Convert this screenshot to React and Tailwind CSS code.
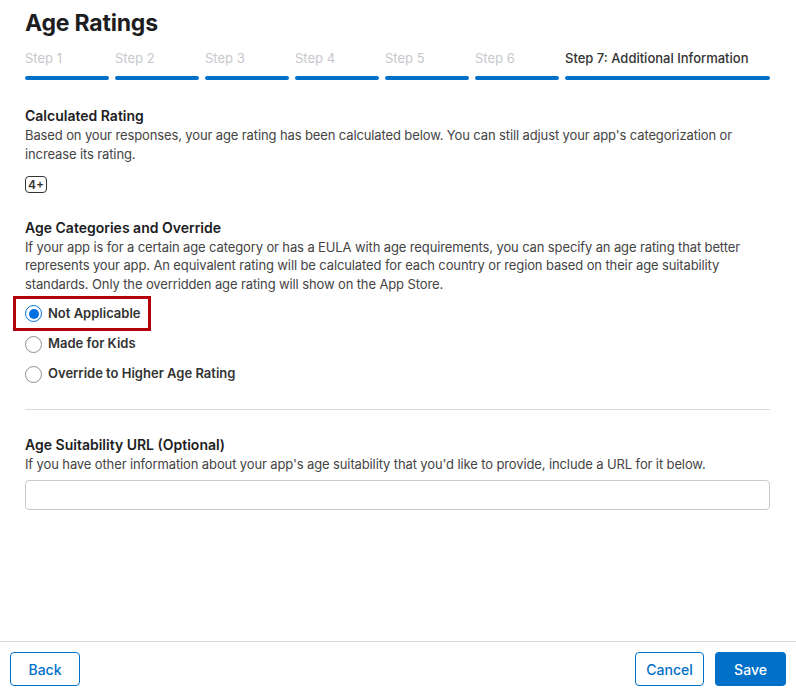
import React from "react";

const steps = ["Step 1", "Step 2", "Step 3", "Step 4", "Step 5", "Step 6"];

const Radio = ({ checked, label }) => (
  <label className="flex items-center gap-[6px] h-[30px] cursor-pointer">
    <span
      className={`flex items-center justify-center w-[17px] h-[17px] rounded-full border ${
        checked ? "border-[#0071e3] border-[1.5px]" : "border-[#8e8e93]"
      } bg-white`}
    >
      {checked && <span className="w-[10px] h-[10px] rounded-full bg-[#0071e3]"></span>}
    </span>
    <span className="text-[13px] font-semibold text-[#333]">{label}</span>
  </label>
);

export default function App() {
  return (
    <div
      className="w-[796px] h-[691px] bg-white flex flex-col text-[#333]"
      style={{ fontFamily: "Inter, 'Noto Sans', sans-serif" }}
    >
      <div className="flex-1 px-[25px] pr-[26px]">
        {/* Header */}
        <h1 className="text-[23px] font-bold text-[#1d1d1f] tracking-[-0.2px] pt-[8px] leading-[30px]">
          Age Ratings
        </h1>

        {/* Steps */}
        <div className="flex gap-[6px] mt-[12px]">
          {steps.map((s) => (
            <div key={s} className="w-[84px] flex flex-col">
              <span className="text-[13px] text-[#c7c7cc] leading-[16px]">{s}</span>
              <div className="h-[4px] mt-[10px] rounded-full bg-[#0070c9]"></div>
            </div>
          ))}
          <div className="flex-1 flex flex-col">
            <span className="text-[13px] font-medium text-[#333] leading-[16px]">
              Step 7: Additional Information
            </span>
            <div className="h-[4px] mt-[10px] rounded-full bg-[#0070c9]"></div>
          </div>
        </div>

        {/* Calculated rating */}
        <h2 className="text-[14px] font-semibold text-[#1d1d1f] mt-[26px] leading-[20px]">
          Calculated Rating
        </h2>
        <p className="text-[13px] leading-[19px] text-[#444] tracking-[-0.12px]">
          Based on your responses, your age rating has been calculated below. You can still adjust your app's categorization or
          <br />
          increase its rating.
        </p>
        <div className="mt-[12px] inline-flex items-center justify-center h-[17px] px-[2px] border border-[#333] rounded-[4px] text-[12px] font-semibold leading-none">
          4+
        </div>

        {/* Age categories */}
        <h2 className="text-[14px] font-semibold text-[#1d1d1f] mt-[23px] leading-[20px]">
          Age Categories and Override
        </h2>
        <p className="text-[13px] leading-[18.5px] text-[#444] tracking-[-0.12px]">
          If your app is for a certain age category or has a EULA with age requirements, you can specify an age rating that better
          <br />
          represents your app. An equivalent rating will be calculated for each country or region based on their age suitability
          <br />
          standards. Only the overridden age rating will show on the App Store.
        </p>

        <div className="flex flex-col mt-[3px]">
          <div className="-ml-[12px] -mb-[2px] w-[138px] border-[3px] border-[#b3000a] pl-[9px] h-[35px] flex items-center">
            <Radio checked label="Not Applicable" />
          </div>
          <Radio label="Made for Kids" />
          <Radio label="Override to Higher Age Rating" />
        </div>

        <div className="border-t border-[#d9d9d9] mt-[20px]"></div>

        {/* URL */}
        <h2 className="text-[14px] font-semibold text-[#1d1d1f] mt-[25px] leading-[20px]">
          Age Suitability URL (Optional)
        </h2>
        <p className="text-[13px] leading-[19px] text-[#444] tracking-[-0.12px]">
          If you have other information about your app's age suitability that you'd like to provide, include a URL for it below.
        </p>
        <input
          type="text"
          className="mt-[6px] w-full h-[30px] border border-[#c9c9c9] rounded-[4px] px-[8px] text-[13px] outline-none"
        />
      </div>

      {/* Footer */}
      <div className="border-t border-[#d9d9d9] h-[50px] flex items-start justify-between px-[10px] pt-[10px] shrink-0">
        <button className="h-[34px] w-[70px] border border-[#0070c9] rounded-[4px] text-[14px] text-[#0070c9] font-medium">
          Back
        </button>
        <div className="flex gap-[11px]">
          <button className="h-[34px] w-[69px] border border-[#0070c9] rounded-[4px] text-[14px] text-[#0070c9] font-medium">
            Cancel
          </button>
          <button className="h-[34px] w-[71px] bg-[#0070c9] rounded-[4px] text-[14px] text-white font-medium">
            Save
          </button>
        </div>
      </div>
    </div>
  );
}
